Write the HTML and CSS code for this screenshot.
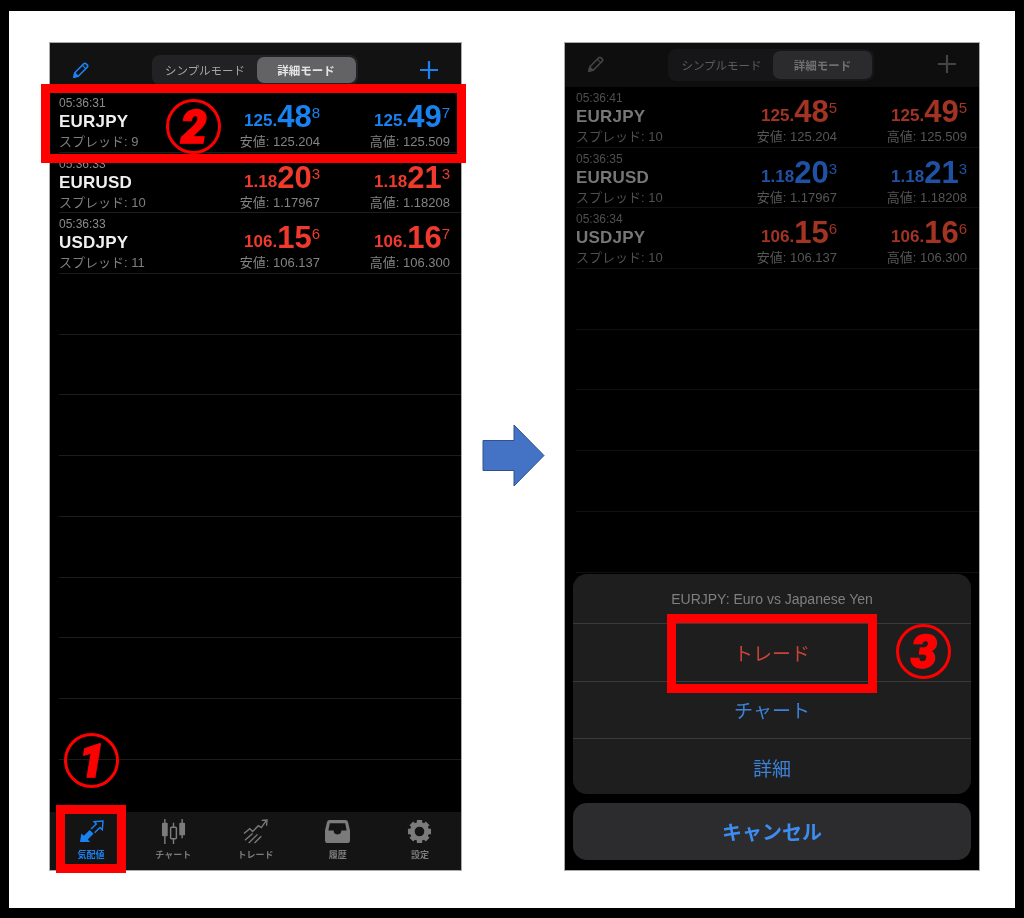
FILE: index.html
```html
<!DOCTYPE html>
<html lang="ja">
  <head>
    <meta charset="UTF-8" />
    <meta name="viewport" content="width=device-width, initial-scale=1.0" />
    <title>MT4 注文手順</title>
    <link rel="stylesheet" href="styles.css">
  </head>

  <body>
    <div class="frame">
      <!-- left screen -->
      <div class="phone phone-left">
        <div class="screen">
          <div class="topbar">
            <svg class="icon-pencil" viewBox="0 0 20 20"><path d="M3 17l1-4.6L13.6 2.8a1.4 1.4 0 0 1 2 0l1.6 1.6a1.4 1.4 0 0 1 0 2L7.600 16z" fill="none" stroke="currentColor" stroke-width="1.700" stroke-linejoin="round"/><path d="M12 4.500l3.500 3.500M3 17l1-4.600L7.600 16z" fill="currentColor" stroke="currentColor" stroke-width="1.200"/></svg>
            <div class="segment">
              <span class="seg">シンプルモード</span>
              <span class="seg seg-on">詳細モード</span>
            </div>
            <svg class="icon-plus" viewBox="0 0 20 20"><path d="M10 1v18M1 10h18" stroke="currentColor" stroke-width="2.200"/></svg>
          </div>

          <div class="list">
            <div class="row">
              <div class="info">
                <div class="time">05:36:31</div>
                <div class="name">EURJPY</div>
                <div class="spread">スプレッド: 9</div>
              </div>
              <div class="quote up"><div class="price">125.<b>48</b><sup>8</sup></div><div class="limit">安値: 125.204</div></div>
              <div class="quote up"><div class="price">125.<b>49</b><sup>7</sup></div><div class="limit">高値: 125.509</div></div>
            </div>
            <div class="row">
              <div class="info">
                <div class="time">05:36:33</div>
                <div class="name">EURUSD</div>
                <div class="spread">スプレッド: 10</div>
              </div>
              <div class="quote down"><div class="price">1.18<b>20</b><sup>3</sup></div><div class="limit">安値: 1.17967</div></div>
              <div class="quote down"><div class="price">1.18<b>21</b><sup>3</sup></div><div class="limit">高値: 1.18208</div></div>
            </div>
            <div class="row">
              <div class="info">
                <div class="time">05:36:33</div>
                <div class="name">USDJPY</div>
                <div class="spread">スプレッド: 11</div>
              </div>
              <div class="quote down"><div class="price">106.<b>15</b><sup>6</sup></div><div class="limit">安値: 106.137</div></div>
              <div class="quote down"><div class="price">106.<b>16</b><sup>7</sup></div><div class="limit">高値: 106.300</div></div>
            </div>
            <div class="row"></div>
            <div class="row"></div>
            <div class="row"></div>
            <div class="row"></div>
            <div class="row"></div>
            <div class="row"></div>
            <div class="row"></div>
            <div class="row"></div>
          </div>

          <div class="tabbar">
            <div class="tab tab-on">
              <svg viewBox="0 0 26 24"><path d="M1 23l1.500-9 2.600 2.400 6-6 4 4-6 6 2.400 2.600z" fill="currentColor"/><path d="M12.500 9.500l5.500-5.300-2.300-2.400L25 1l-.8 9.200-2.400-2.300-5.500 5.400" fill="none" stroke="currentColor" stroke-width="1.500"/></svg>
              <span>気配値</span>
            </div>
            <div class="tab">
              <svg viewBox="0 0 26 26"><path d="M4 0v26M13 4v22M22 0v20" stroke="currentColor" stroke-width="1.500"/><rect x="1" y="4" width="6" height="14" rx="1" fill="currentColor"/><rect x="10" y="8.500" width="6" height="12" rx="1" fill="#141414" stroke="currentColor" stroke-width="1.500"/><rect x="19" y="4" width="6" height="13" rx="1" fill="currentColor"/></svg>
              <span>チャート</span>
            </div>
            <div class="tab">
              <svg viewBox="0 0 26 26"><path d="M1 15l6-5 3 3 6-6 3 2 5-7" fill="none" stroke="currentColor" stroke-width="1.400"/><path d="M19.500 1.500L25 1l-.5 6" fill="none" stroke="currentColor" stroke-width="1.400"/><path d="M2 22l8-7M6 25l9-9M12 25l7-7" stroke="currentColor" stroke-width="1.400"/></svg>
              <span>トレード</span>
            </div>
            <div class="tab">
              <svg viewBox="0 0 26 24"><path d="M5 0h16a3 3 0 0 1 3 2.400L26 11v10a3 3 0 0 1-3 3H3a3 3 0 0 1-3-3V11l2-8.600A3 3 0 0 1 5 0zM5 3.500L3.500 11h5.500a4 4 0 0 0 8 0h5.500L21 3.500z" fill="currentColor" fill-rule="evenodd"/></svg>
              <span>履歴</span>
            </div>
            <div class="tab">
              <svg viewBox="0 0 26 26"><circle cx="13" cy="13" r="7.500" fill="none" stroke="currentColor" stroke-width="5"/><path d="M13 1v5M13 20v5M1 13h5M20 13h5M4.500 4.500L8 8M18 18l3.500 3.500M21.500 4.500L18 8M8 18l-3.500 3.500" stroke="currentColor" stroke-width="5.500"/></svg>
              <span>設定</span>
            </div>
          </div>
        </div>

        <div class="mark mark-top"></div>
        <div class="mark mark-tab"></div>
        <div class="badge badge-one">1</div>
        <div class="badge badge-two">2</div>
      </div>

      <svg class="arrow" viewBox="0 0 63 63"><path d="M1 16.500h31V1l30 30.500L32 62V46.500H1z" fill="#4472c4" stroke="#2f528f"/></svg>

      <!-- right screen, dimmed behind the action sheet -->
      <div class="phone phone-right">
        <div class="screen dim">
          <div class="topbar">
            <svg class="icon-pencil" viewBox="0 0 20 20"><path d="M3 17l1-4.600L13.600 2.800a1.400 1.400 0 0 1 2 0l1.600 1.600a1.400 1.400 0 0 1 0 2L7.600 16z" fill="none" stroke="currentColor" stroke-width="1.700" stroke-linejoin="round"/><path d="M12 4.500l3.500 3.500M3 17l1-4.600L7.600 16z" fill="currentColor" stroke="currentColor" stroke-width="1.200"/></svg>
            <div class="segment">
              <span class="seg">シンプルモード</span>
              <span class="seg seg-on">詳細モード</span>
            </div>
            <svg class="icon-plus" viewBox="0 0 20 20"><path d="M10 1v18M1 10h18" stroke="currentColor" stroke-width="2.200"/></svg>
          </div>

          <div class="list">
            <div class="row">
              <div class="info">
                <div class="time">05:36:41</div>
                <div class="name">EURJPY</div>
                <div class="spread">スプレッド: 10</div>
              </div>
              <div class="quote down"><div class="price">125.<b>48</b><sup>5</sup></div><div class="limit">安値: 125.204</div></div>
              <div class="quote down"><div class="price">125.<b>49</b><sup>5</sup></div><div class="limit">高値: 125.509</div></div>
            </div>
            <div class="row">
              <div class="info">
                <div class="time">05:36:35</div>
                <div class="name">EURUSD</div>
                <div class="spread">スプレッド: 10</div>
              </div>
              <div class="quote up"><div class="price">1.18<b>20</b><sup>3</sup></div><div class="limit">安値: 1.17967</div></div>
              <div class="quote up"><div class="price">1.18<b>21</b><sup>3</sup></div><div class="limit">高値: 1.18208</div></div>
            </div>
            <div class="row">
              <div class="info">
                <div class="time">05:36:34</div>
                <div class="name">USDJPY</div>
                <div class="spread">スプレッド: 10</div>
              </div>
              <div class="quote down"><div class="price">106.<b>15</b><sup>6</sup></div><div class="limit">安値: 106.137</div></div>
              <div class="quote down"><div class="price">106.<b>16</b><sup>6</sup></div><div class="limit">高値: 106.300</div></div>
            </div>
            <div class="row"></div>
            <div class="row"></div>
            <div class="row"></div>
            <div class="row"></div>
            <div class="row"></div>
          </div>

          <div class="sheet">
            <div class="actions">
              <div class="action action-title">EURJPY: Euro vs Japanese Yen</div>
              <div class="action action-red">トレード</div>
              <div class="action">チャート</div>
              <div class="action">詳細</div>
            </div>
            <div class="cancel">キャンセル</div>
          </div>
        </div>

        <div class="mark mark-trade"></div>
        <div class="badge badge-three">3</div>
      </div>
    </div>
  </body>
</html>
```
FILE: styles.css
```css
* {
  box-sizing: border-box;
}

body {
  margin: 0;
  height: 918px;
  background: #000;
  font-family: "Liberation Sans", "Noto Sans CJK JP", sans-serif;
  overflow: hidden;
}

.frame {
  margin: 11px 0 0 9px;
  width: 1006px;
  height: 897px;
  padding-top: 32px;
  padding-left: 41px;
  background: #fff;
  display: flex;
  align-items: flex-start;
}

.phone {
  position: relative;
  height: 827px;
  flex: none;
}

.phone-left {
  width: 411px;
}

.phone-right {
  width: 414px;
}

.arrow {
  width: 63px;
  height: 63px;
  flex: none;
  margin: 381px 20px 0 21px;
}

.screen {
  height: 100%;
  background: #000;
  display: flex;
  flex-direction: column;
  outline: 1px solid #aaa;
  overflow: hidden;
  position: relative;
  filter: blur(0.4px);
}

/* top bar */
.topbar {
  height: 49px;
  flex: none;
  background: #121212;
  color: #1a82f0;
  display: flex;
  align-items: flex-start;
  justify-content: space-between;
  padding: 12px 22px 0 21px;
}

.icon-pencil {
  width: 19px;
  height: 19px;
  margin-top: 6px;
}

.icon-plus {
  width: 20px;
  height: 20px;
  margin-top: 5px;
}

.segment {
  width: 206px;
  height: 30px;
  padding: 2px;
  border-radius: 8px;
  background: #222224;
  display: flex;
}

.seg {
  flex: 1;
  display: flex;
  align-items: center;
  justify-content: center;
  font-size: 11.500px;
  color: #a5a5a5;
  border-radius: 7px;
}

.seg-on {
  flex: none;
  width: 99px;
  background: #636366;
  color: #e4e4e4;
  font-weight: bold;
}

/* quotes */
.list {
  flex: 1;
}

.row {
  height: 60.700px;
  margin-left: 9px;
  padding-right: 11px;
  border-bottom: 1px solid #1c1c1c;
  display: flex;
  justify-content: flex-end;
}

.info {
  flex: 1;
  padding-top: 4px;
}

.time {
  font-size: 12px;
  line-height: 15px;
  color: #8c8c8c;
}

.name {
  font-family: "Liberation Sans Narrow", "Liberation Sans", sans-serif;
  font-size: 17px;
  line-height: 22px;
  font-weight: bold;
  color: #f0f0f0;
  letter-spacing: 0.2px;
}

.spread {
  font-size: 13px;
  line-height: 18px;
  color: #7e7e7e;
}

.quote {
  width: 130px;
  flex: none;
  text-align: right;
  padding-top: 9px;
}

.price {
  font-family: "Liberation Sans Narrow", "Liberation Sans", sans-serif;
  font-size: 17px;
  line-height: 31px;
  height: 31px;
  font-weight: bold;
  white-space: nowrap;
}

.price b {
  font-size: 31px;
  vertical-align: -1px;
}

.price sup {
  font-size: 15px;
  font-weight: normal;
  line-height: 0;
  vertical-align: 8px;
}

.limit {
  font-size: 13px;
  line-height: 18px;
  margin-top: 1px;
  color: #838383;
}

.up {
  color: #1a82f0;
}

.down {
  color: #ef3a2d;
}

/* bottom tabs */
.tabbar {
  height: 58px;
  flex: none;
  background: #141414;
  display: flex;
}

.tab {
  flex: 1;
  display: flex;
  flex-direction: column;
  align-items: center;
  padding-top: 7px;
  color: #7b7b7b;
  font-size: 9px;
  font-weight: bold;
}

.tab svg {
  width: 25px;
  height: 25px;
  margin-bottom: 4px;
}

.tab-on {
  color: #1a82f0;
}

/* dimmed screen */
.dim .topbar {
  height: 44px;
  padding-top: 6px;
  background: #0e0e0e;
  color: #444;
}

.dim .segment {
  background: #161618;
  height: 32px;
}

.dim .seg {
  color: #5d5d5d;
}

.dim .seg-on {
  background: #2b2b2e;
  color: #6f6f6f;
}

.dim .row {
  margin-left: 11px;
  padding-right: 12px;
  border-bottom-color: #101010;
}

.dim .time,
.dim .spread,
.dim .limit {
  color: #4f4f4f;
}

.dim .name {
  color: #777;
}

.dim .up {
  color: #1f52a5;
}

.dim .down {
  color: #a33424;
}

.dim .limit {
  color: #565656;
}

.sheet {
  position: absolute;
  left: 8px;
  right: 8px;
  top: 531px;
  display: flex;
  flex-direction: column;
  gap: 9px;
}

.actions {
  height: 220px;
  border-radius: 14px;
  background: #1e1e1e;
  overflow: hidden;
}

.action {
  height: 57.500px;
  display: flex;
  align-items: center;
  justify-content: center;
  border-top: 1px solid #3a3a3a;
  font-size: 19px;
  color: #3d82d8;
}

.action-title {
  height: 49px;
  border-top: 0;
  font-size: 14px;
  color: #7f7f7f;
}

.action-red {
  color: #c9423a;
}

.cancel {
  height: 57px;
  border-radius: 14px;
  background: #2c2c2e;
  display: flex;
  align-items: center;
  justify-content: center;
  font-size: 20px;
  font-weight: bold;
  color: #3d8cf0;
}

/* red annotations */
.mark {
  position: absolute;
  border: 9px solid #f00;
}

.mark-top {
  left: -9px;
  top: 41px;
  width: 425px;
  height: 79px;
}

.mark-tab {
  left: 6px;
  top: 762px;
  width: 70px;
  height: 68px;
}

.mark-trade {
  left: 102px;
  top: 571px;
  width: 210px;
  height: 79px;
}

.badge {
  position: absolute;
  width: 55px;
  height: 55px;
  border: 3px solid #f00;
  border-radius: 50%;
  display: flex;
  align-items: center;
  justify-content: center;
  font-family: "Roboto", sans-serif;
  font-size: 46px;
  font-weight: 900;
  font-style: italic;
  color: #f00;
  -webkit-text-stroke: 1.500px #f00;
}

.badge-one {
  left: 14px;
  top: 690px;
}

.badge-two {
  left: 116px;
  top: 56px;
}

.badge-three {
  left: 331px;
  top: 581px;
}
```
